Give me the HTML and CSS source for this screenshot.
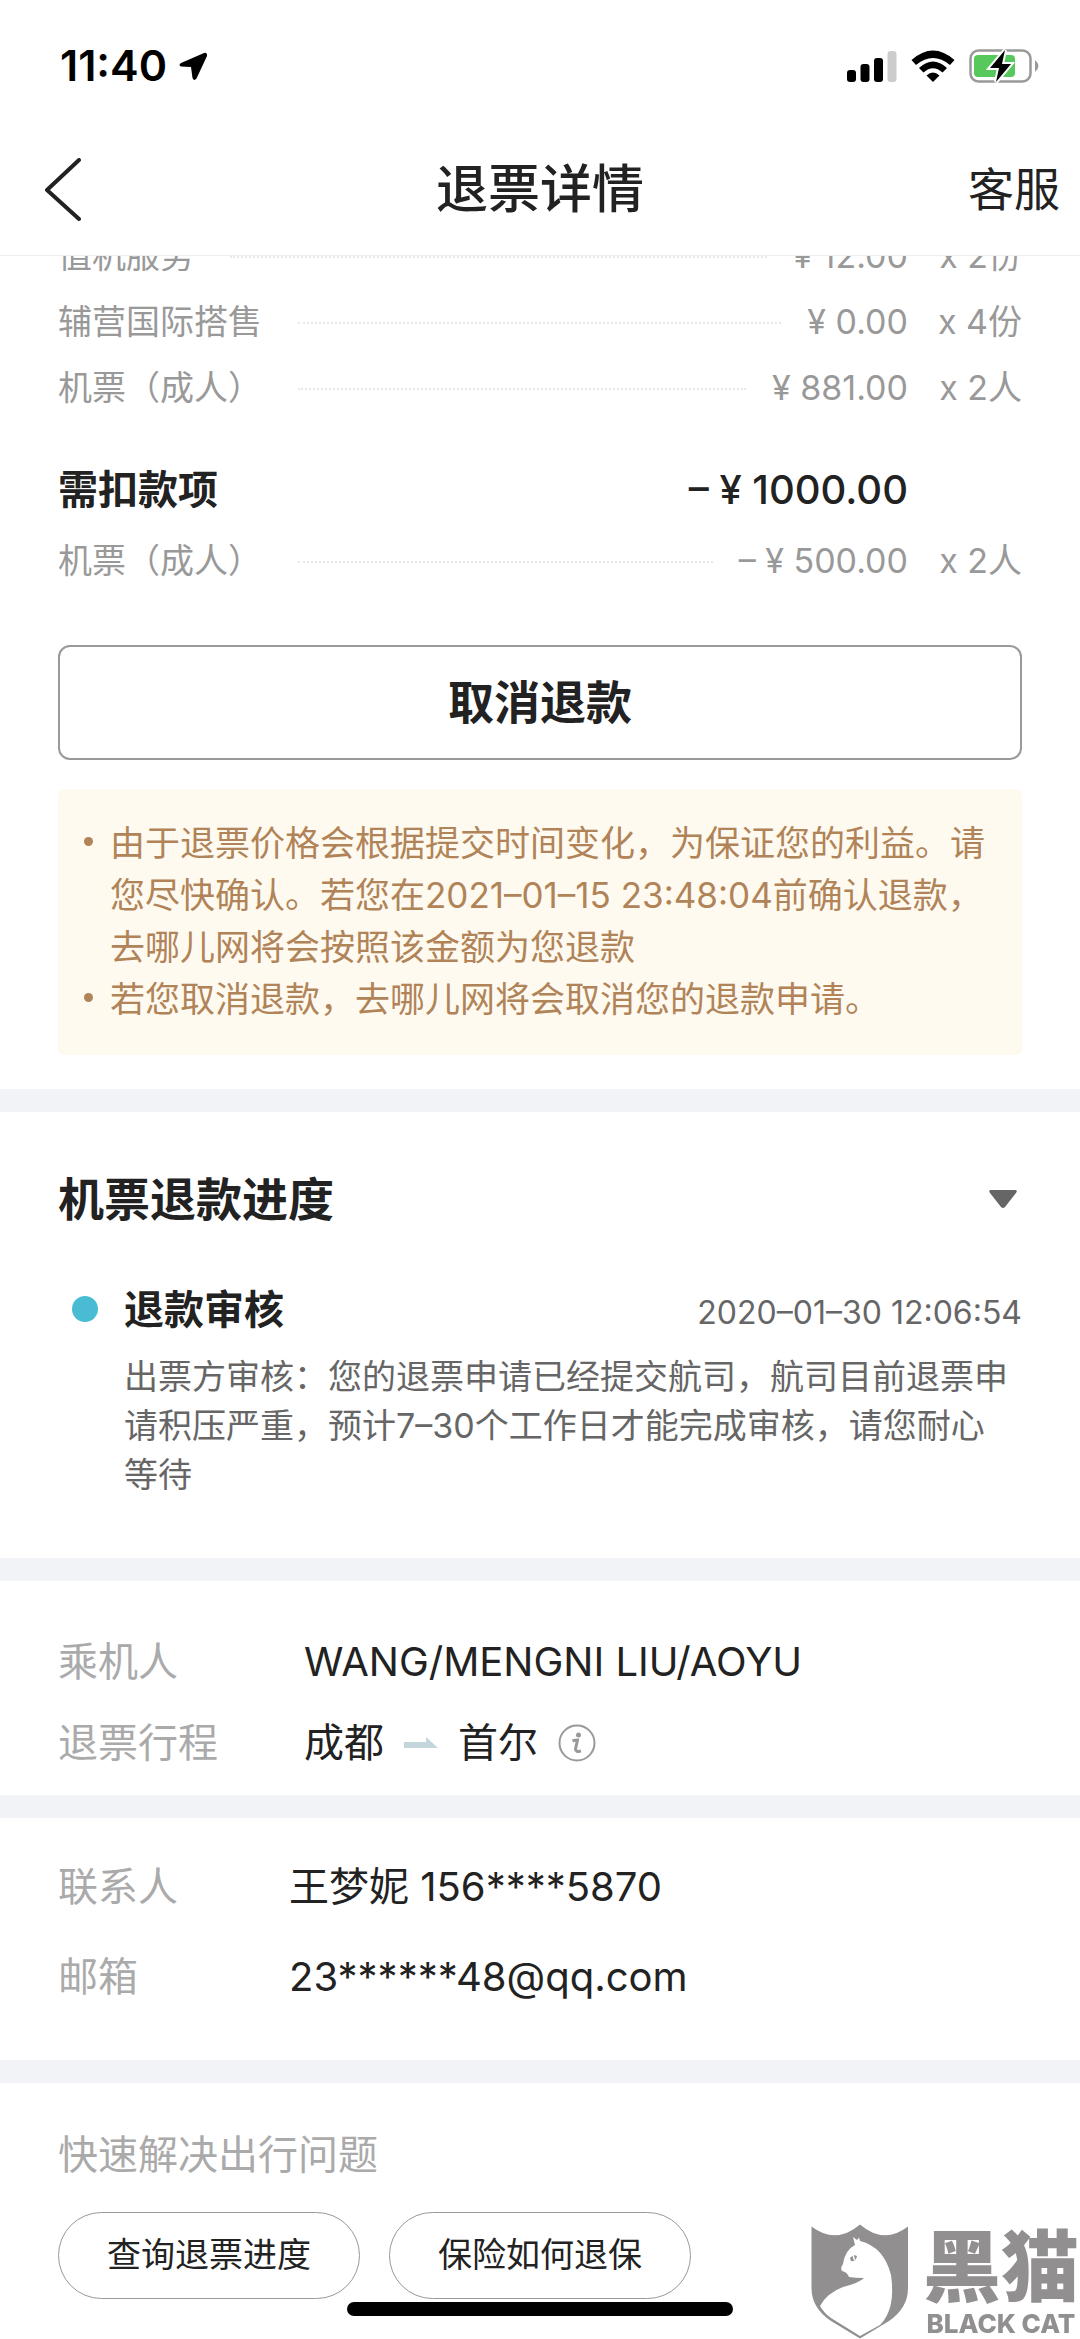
FILE: index.html
```html
<!DOCTYPE html>
<html lang="zh-CN">
<head>
    <meta charset="UTF-8">
    <meta name="viewport" content="width=device-width, initial-scale=1">
    <title>退票详情</title>
    <link rel="stylesheet" href="styles.css">
</head>
<body>
    <header class="top">
        <!-- Status bar -->
        <div class="status">
            <span class="clock">11:40</span>
            <svg class="location" width="28" height="28" viewBox="0 0 28 28">
                <path d="M25 1 L2 11 Q-1 13 2 14.500 L12 15 L13.500 26 Q15 29.500 17.500 26.500 L28 4 Q28.500 0 25 1 Z" fill="#000"/>
            </svg>
            <div class="status-icons">
                <svg width="50" height="32" viewBox="0 0 50 32">
                    <rect x="0" y="20" width="9" height="12" rx="3"/>
                    <rect x="13.500" y="14" width="9" height="18" rx="3"/>
                    <rect x="27" y="8" width="9" height="24" rx="3"/>
                    <rect x="40.500" y="1" width="9" height="31" rx="3" fill="#ccc"/>
                </svg>
                <svg width="44" height="32" viewBox="0 0 44 32">
                    <path d="M0.500 10 Q22 -9 43.500 10 L39 15 Q22 1 5 15 Z"/>
                    <path d="M8 18 Q22 5 36 18 L31.500 22.500 Q22 14 12.500 22.500 Z"/>
                    <path d="M15.500 25.500 Q22 19.500 28.500 25.500 L22 32 Z"/>
                </svg>
                <svg width="71" height="34" viewBox="0 0 71 34">
                    <rect x="1.500" y="1.500" width="60" height="31" rx="8" fill="none" stroke="#999" stroke-width="2.500"/>
                    <rect x="5" y="6" width="41" height="22" rx="4" fill="#57c95c"/>
                    <path d="M66 11 Q73 17 66 23 Z" fill="#999"/>
                    <path d="M36 1 L21 19 L30 19 L27 33 L42 15 L33 15 Z" fill="#000" stroke="#fff" stroke-width="4" paint-order="stroke"/>
                </svg>
            </div>
        </div>
        <!-- Nav bar -->
        <nav class="nav">
            <button class="back" aria-label="返回">
                <svg width="38" height="64" viewBox="0 0 38 64">
                    <path d="M35 2 L3 32 L35 61" fill="none" stroke="#222" stroke-width="4" stroke-linecap="round" stroke-linejoin="round"/>
                </svg>
            </button>
            <h1>退票详情</h1>
            <a class="service" href="#">客服</a>
        </nav>
    </header>

    <main>
        <section class="fees">
            <ul class="fee-list">
                <li><span>值机服务</span><i class="dots"></i><span>¥ 12.00</span><span class="count">x 2份</span></li>
                <li><span>辅营国际搭售</span><i class="dots"></i><span>¥ 0.00</span><span class="count">x 4份</span></li>
                <li><span>机票（成人）</span><i class="dots"></i><span>¥ 881.00</span><span class="count">x 2人</span></li>
            </ul>
            <h2 class="fee-total"><span>需扣款项</span><span class="total">– ¥ 1000.00</span></h2>
            <ul class="fee-list">
                <li><span>机票（成人）</span><i class="dots"></i><span>– ¥ 500.00</span><span class="count">x 2人</span></li>
            </ul>
            <button class="cancel">取消退款</button>
            <ul class="notes">
                <li>由于退票价格会根据提交时间变化，为保证您的利益。请您尽快确认。若您在2021–01–15 23:48:04前确认退款，<br>去哪儿网将会按照该金额为您退款</li>
                <li>若您取消退款，去哪儿网将会取消您的退款申请。</li>
            </ul>
        </section>

        <section class="progress">
            <div class="progress-title">
                <h2>机票退款进度</h2>
                <button class="toggle" aria-label="收起">
                    <svg width="30" height="20" viewBox="0 0 30 20">
                        <path d="M3 1 H27 Q30 1 28 4 L17 18 Q15 20 13 18 L2 4 Q0 1 3 1 Z" fill="#666"/>
                    </svg>
                </button>
            </div>
            <div class="step">
                <div class="step-head">
                    <h3>退款审核</h3>
                    <time>2020–01–30 12:06:54</time>
                </div>
                <p>出票方审核：您的退票申请已经提交航司，航司目前退票申请积压严重，预计7–30个工作日才能完成审核，请您耐心<br>等待</p>
            </div>
        </section>

        <section class="trip">
            <dl>
                <div><dt>乘机人</dt><dd>WANG/MENGNI LIU/AOYU</dd></div>
                <div>
                    <dt>退票行程</dt>
                    <dd>
                        <span>成都</span>
                        <svg width="34" height="12" viewBox="0 0 34 12">
                            <path d="M0 5 H22 V0 L34 11 H0 Z" fill="#c3d6db"/>
                        </svg>
                        <span>首尔</span>
                        <button class="info" aria-label="行程说明">
                            <svg width="38" height="38" viewBox="0 0 38 38">
                                <circle cx="19" cy="19" r="17.500" fill="none" stroke="#999" stroke-width="2"/>
                                <circle cx="20.500" cy="11" r="2.500" fill="#999"/>
                                <path d="M14.500 17 Q17 16 19.500 16 L17.500 25 Q17.500 28.500 23 27" fill="none" stroke="#999" stroke-width="3"/>
                            </svg>
                        </button>
                    </dd>
                </div>
            </dl>
        </section>

        <section class="contact">
            <dl>
                <div><dt>联系人</dt><dd>王梦妮 156****5870</dd></div>
                <div><dt>邮箱</dt><dd>23******48@qq.com</dd></div>
            </dl>
        </section>

        <section class="help">
            <h2>快速解决出行问题</h2>
            <div class="questions">
                <button>查询退票进度</button>
                <button>保险如何退保</button>
            </div>
        </section>
    </main>

    <div class="home-bar"></div>

    <!-- Watermark -->
    <div class="watermark">
        <svg width="98" height="115" viewBox="0 0 98 115">
            <path d="M0.500 2.500 Q25 21 49 0.500 Q73 21 97 2.500 V64 Q97 84 78 97 L49 114.500 L20 97 Q0.500 84 0.500 64 Z" fill="#918f90"/>
            <path d="M42 13 L46 16 L48 13.500 L49 17 Q73 23 80 51 Q85 85 69 101 L49 112 L20 94 Q13 89 9 82 Q16 69 32 63 Q48 59 53 54 Q44 54 38 53 Q36 48 31 47 Q29 44 32 40 Q34 26 44 21 Z" fill="#fff"/>
            <path d="M39 34 Q42 30 46 32 Q45 38 40 37 Z" fill="#918f90"/>
            <path d="M42 31 L43.500 36" stroke="#fff" stroke-width="1.500"/>
        </svg>
        <div class="brand">
            <b>黑猫</b>
            <small>BLACK CAT</small>
        </div>
    </div>
</body>
</html>
```
FILE: styles.css
```css
* {
    box-sizing: border-box;
    margin: 0;
    padding: 0;
}

body {
    font-family: Inter, "Noto Sans CJK SC", sans-serif;
    font-size: 35px;
    line-height: 1.3;
    color: #222;
    background: #fff;
}

button {
    font: inherit;
    color: inherit;
    background: none;
    border: none;
    cursor: pointer;
}

svg {
    display: block;
}

ul {
    list-style: none;
}

/* Header */
.top {
    position: sticky;
    top: 0;
    z-index: 1;
    background: #fff;
    border-bottom: 1px solid #eee;
}

.status {
    display: flex;
    align-items: center;
    height: 125px;
    padding: 7px 40px 0 60px;
    color: #000;
}

.clock {
    font-size: 43px;
    font-weight: 600;
}

.location {
    margin-left: 12px;
}

.status-icons {
    display: flex;
    align-items: center;
    gap: 14px;
    margin-left: auto;
}

.nav {
    display: grid;
    grid-template-columns: 1fr auto 1fr;
    align-items: center;
    height: 130px;
    padding: 0 20px 0 44px;
}

.back {
    justify-self: start;
}

.nav h1 {
    font-size: 52px;
    font-weight: 500;
    margin-right: 24px;
}

.service {
    justify-self: end;
    font-size: 46px;
    color: inherit;
    text-decoration: none;
}

/* Sections */
section {
    padding: 0 58px;
}

section + section {
    border-top: 23px solid #f1f3f6;
}

h2, h3 {
    font-weight: 600;
}

/* Fees */
.fees {
    margin-top: -33px;
    padding-bottom: 34px;
}

.fee-list li {
    display: flex;
    align-items: center;
    height: 66px;
    font-size: 34px;
    color: #999;
}

.dots {
    flex: 1;
    margin: 2px 26px 0 36px;
    border-top: 2px dotted #e8e8e8;
}

.count {
    width: 114px;
    text-align: right;
}

.fee-total {
    display: flex;
    justify-content: space-between;
    margin: 39px 0 8px;
    padding-right: 114px;
    font-size: 40px;
    line-height: 60px;
}

.total {
    font-weight: 500;
}

.cancel {
    display: block;
    width: 100%;
    height: 115px;
    margin-top: 51px;
    border: 2px solid #999;
    border-radius: 12px;
    font-size: 46px;
    font-weight: 600;
}

.notes {
    margin-top: 29px;
    padding: 28px 30px 30px 52px;
    border-radius: 6px;
    background: #fffaf0;
    color: #b08458;
    line-height: 52px;
}

.notes li {
    position: relative;
}

.notes li::before {
    content: "";
    position: absolute;
    top: 20px;
    left: -26px;
    width: 9px;
    height: 9px;
    border-radius: 50%;
    background: #b08458;
}

/* Refund progress */
.progress {
    padding-top: 57px;
    padding-bottom: 59px;
}

.progress-title {
    display: flex;
    align-items: center;
    justify-content: space-between;
    padding-right: 4px;
}

.progress-title h2 {
    font-size: 46px;
    line-height: 60px;
}

.step {
    position: relative;
    margin-top: 55px;
    padding-left: 66px;
}

.step::before {
    content: "";
    position: absolute;
    top: 12px;
    left: 14px;
    width: 26px;
    height: 26px;
    border-radius: 50%;
    background: #49bcd3;
}

.step-head {
    display: flex;
    align-items: baseline;
    justify-content: space-between;
    line-height: 52px;
}

.step h3 {
    font-size: 40px;
}

.step time {
    font-size: 32px;
    color: #666;
}

.step p {
    margin-top: 13px;
    font-size: 34px;
    line-height: 49px;
    color: #666;
}

/* Passenger and contact */
dl > div {
    display: flex;
    align-items: center;
    font-size: 40px;
}

dt {
    color: #aaa;
}

dd {
    display: flex;
    align-items: center;
    gap: 20px;
}

.trip {
    padding-top: 40px;
    padding-bottom: 12px;
}

.trip dl > div {
    height: 81px;
}

.trip dt {
    width: 246px;
}

.contact {
    padding-top: 24px;
    padding-bottom: 38px;
}

.contact dl > div {
    height: 90px;
}

.contact dt {
    width: 231px;
}

/* Quick help */
.help {
    padding-top: 42px;
    padding-bottom: 40px;
}

.help h2 {
    font-size: 40px;
    font-weight: 400;
    line-height: 60px;
    color: #aaa;
}

.questions {
    display: flex;
    gap: 29px;
    margin-top: 27px;
}

.questions button {
    height: 87px;
    padding: 0 48px;
    border: 1px solid #999;
    border-radius: 44px;
    font-size: 34px;
}

/* Overlays */
.home-bar {
    position: fixed;
    bottom: 23px;
    left: 50%;
    width: 386px;
    height: 14px;
    border-radius: 7px;
    background: #000;
    transform: translateX(-50%);
}

.watermark {
    position: fixed;
    right: 1px;
    bottom: 0;
    display: flex;
    gap: 14px;
    color: #918f90;
}

.brand {
    display: flex;
    flex-direction: column;
    align-items: center;
    padding-top: 2px;
}

.brand b {
    font-size: 78px;
    font-weight: 900;
    line-height: 84px;
}

.brand small {
    font-size: 26px;
    font-weight: 800;
    line-height: 28px;
}
```
